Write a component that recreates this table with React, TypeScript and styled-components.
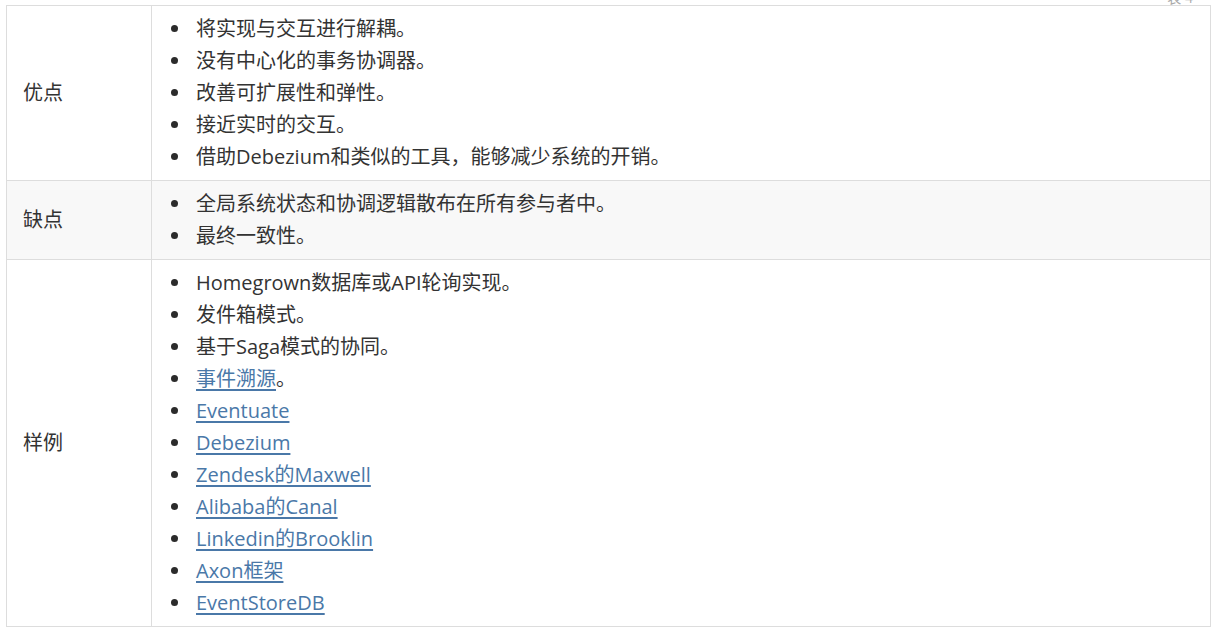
import React from "react";
import styled, { createGlobalStyle } from "styled-components";

const GlobalStyle = createGlobalStyle`
  body {
    margin: 0;
    background: #ffffff;
    font-family: "Open Sans", "Noto Sans CJK SC", sans-serif;
    color: #333333;
  }
`;

const Page = styled.div`
  padding: 0 4px 0 6px;
`;

const Caption = styled.div`
  height: 5px;
  overflow: hidden;
  display: flex;
  justify-content: flex-end;
  align-items: flex-end;
  padding-right: 18px;
  font-size: 14px;
  line-height: 14px;
  color: #aaaaaa;
`;

const Table = styled.table`
  width: 1205px;
  border-collapse: collapse;
  font-size: 20px;
  line-height: 32px;
`;

const Row = styled.tr<{ $shaded?: boolean }>`
  background: ${(p) => (p.$shaded ? "#f8f8f8" : "#ffffff")};
`;

const HeadCell = styled.td`
  width: 128px;
  border: 1px solid #dddddd;
  padding: 7px 0 7px 16px;
  vertical-align: middle;
`;

const BodyCell = styled.td`
  border: 1px solid #dddddd;
  padding: 7px 16px 7px 0;
  vertical-align: top;
`;

const List = styled.ul`
  margin: 0;
  padding-left: 44px;
  list-style: none;
`;

const Bullet = styled.li`
  &::before {
    content: "";
    display: inline-block;
    width: 7px;
    height: 7px;
    border-radius: 50%;
    background: #2b2b2b;
    margin-left: -25px;
    margin-right: 18px;
    vertical-align: 4px;
  }
`;

const Link = styled.a`
  color: #4a78a8;
  text-decoration: underline;
  text-decoration-thickness: 2px;
  text-underline-offset: 3px;
`;

type Item = { text: string; link?: boolean; tail?: string };

const rows: { label: string; shaded?: boolean; items: Item[] }[] = [
  {
    label: "优点",
    items: [
      { text: "将实现与交互进行解耦。" },
      { text: "没有中心化的事务协调器。" },
      { text: "改善可扩展性和弹性。" },
      { text: "接近实时的交互。" },
      { text: "借助Debezium和类似的工具，能够减少系统的开销。" },
    ],
  },
  {
    label: "缺点",
    shaded: true,
    items: [
      { text: "全局系统状态和协调逻辑散布在所有参与者中。" },
      { text: "最终一致性。" },
    ],
  },
  {
    label: "样例",
    items: [
      { text: "Homegrown数据库或API轮询实现。" },
      { text: "发件箱模式。" },
      { text: "基于Saga模式的协同。" },
      { text: "事件溯源", link: true, tail: "。" },
      { text: "Eventuate", link: true },
      { text: "Debezium", link: true },
      { text: "Zendesk的Maxwell", link: true },
      { text: "Alibaba的Canal", link: true },
      { text: "Linkedin的Brooklin", link: true },
      { text: "Axon框架", link: true },
      { text: "EventStoreDB", link: true },
    ],
  },
];

export default function App() {
  return (
    <>
      <GlobalStyle />
      <Page>
        <Caption>表 4</Caption>
        <Table>
          <tbody>
            {rows.map((r) => (
              <Row key={r.label} $shaded={r.shaded}>
                <HeadCell>{r.label}</HeadCell>
                <BodyCell>
                  <List>
                    {r.items.map((it) => (
                      <Bullet key={it.text}>
                        {it.link ? <Link href="#">{it.text}</Link> : it.text}
                        {it.tail}
                      </Bullet>
                    ))}
                  </List>
                </BodyCell>
              </Row>
            ))}
          </tbody>
        </Table>
      </Page>
    </>
  );
}
